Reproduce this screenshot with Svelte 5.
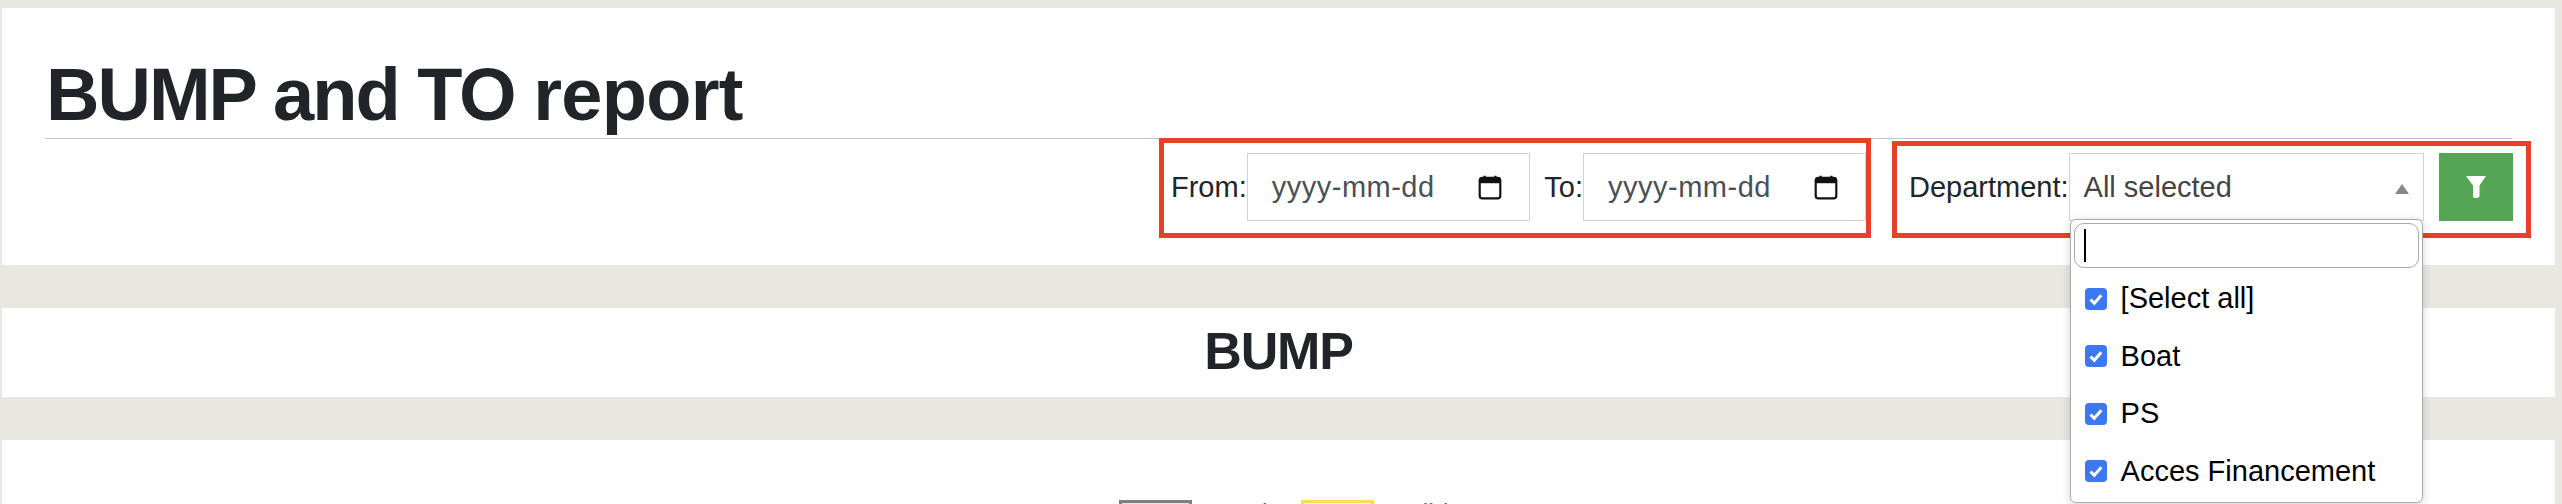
<script>
  const departments = ['[Select all]', 'Boat', 'PS', 'Acces Financement']
</script>

{#snippet dateField(label)}
  <span class="lbl">{label}</span>
  <div class="date">
    <span class="ph">yyyy-mm-dd</span>
    <svg class="cal" viewBox="0 0 24 24" width="26" height="26">
      <path d="M7 1.5v3M17 1.5v3" stroke="#111" stroke-width="2" />
      <rect x="2.5" y="3.5" width="19" height="19" rx="2.5" fill="none" stroke="#111" stroke-width="2" />
      <rect x="2.5" y="3.5" width="19" height="5" fill="#111" />
    </svg>
  </div>
{/snippet}

<div class="page">
  <section class="head">
    <h1>BUMP and TO <span class="tail">report</span></h1>
    <div class="filters">
      <div class="group dates">
        {@render dateField('From:')}
        <span class="gap"></span>
        {@render dateField('To:')}
      </div>
      <div class="group depts">
        <span class="lbl">Department:</span>
        <div class="select">
          <span>All selected</span>
          <i class="arrow"></i>
          <div class="menu">
            <div class="search"><i class="caret"></i></div>
            <ul>
              {#each departments as d}
                <li>
                  <svg viewBox="0 0 22 22" width="22" height="22">
                    <rect width="22" height="22" rx="4" fill="#3b78f2" />
                    <path d="M5.5 11.5l3.8 3.8 7-8" fill="none" stroke="#fff" stroke-width="3" />
                  </svg>
                  {d}
                </li>
              {/each}
            </ul>
          </div>
        </div>
        <button class="go" aria-label="Filter">
          <svg viewBox="0 0 20 22" width="20" height="22">
            <path d="M0 0h20L13.5 9.500V20.500L11 22H8.500q-1.500 0-1.500-2V9.500z" fill="#fff" />
          </svg>
        </button>
      </div>
    </div>
  </section>

  <section class="title">
    <h2>BUMP</h2>
  </section>

  <section class="chart">
    <div class="legend">
      <i class="swatch grey"></i><span>Sunday</span>
      <i class="swatch yellow"></i><span>Holiday</span>
    </div>
  </section>
</div>

<style>
  :global(body) {
    margin: 0;
    background: #e8e7e2;
    font-family: 'Liberation Sans', Arial, sans-serif;
    color: #212529;
  }
  .page {
    height: 504px;
    overflow: hidden;
    padding: 8px 7px 0 2px;
    box-sizing: border-box;
  }
  section {
    background: #fff;
  }
  .head {
    height: 257px;
    padding: 0 43px;
    box-sizing: border-box;
  }
  h1 {
    margin: 0;
    height: 131px;
    box-sizing: border-box;
    padding-top: 45px;
    padding-left: 1px;
    font-size: 74px;
    line-height: 84px;
    font-weight: 700;
    letter-spacing: -2px;
    white-space: nowrap;
    border-bottom: 1px solid #c4c4c4;
  }
  .tail {
    letter-spacing: -0.7px;
  }
  .filters {
    display: flex;
    justify-content: flex-end;
    align-items: flex-start;
    margin-top: -1px;
  }
  .group {
    display: flex;
    align-items: center;
    box-sizing: border-box;
    border: 5px solid #e8412a;
    height: 100px;
    font-size: 29px;
  }
  .dates {
    width: 712px;
    margin-right: 21px;
    padding-left: 7px;
    padding-bottom: 2px;
  }
  .depts {
    width: 639px;
    margin-top: 3px;
    height: 97px;
    margin-right: -19px;
    padding-left: 12px;
    padding-bottom: 5px;
  }
  .lbl {
    white-space: nowrap;
  }
  .gap {
    flex: 1;
  }
  .date {
    width: 283px;
    height: 68px;
    flex: none;
    box-sizing: border-box;
    border: 1px solid #ced4da;
    display: flex;
    align-items: center;
    justify-content: space-between;
    padding: 0 26px 0 24px;
    color: #495057;
    letter-spacing: 0.5px;
  }
  .select {
    position: relative;
    width: 355px;
    height: 68px;
    flex: none;
    box-sizing: border-box;
    border: 1px solid #ced4da;
    display: flex;
    align-items: center;
    justify-content: space-between;
    padding: 0 14px 0 14px;
    color: #444;
  }
  .arrow {
    width: 0;
    height: 0;
    border: 7px solid transparent;
    border-top: 0;
    border-bottom: 10px solid #888;
    margin-top: 4px;
  }
  .menu {
    position: absolute;
    left: 0;
    top: 65px;
    width: 353px;
    height: 284px;
    box-sizing: border-box;
    background: #fff;
    border: 1px solid #aaa;
    border-radius: 6px;
    box-shadow: 0 2px 10px rgba(0, 0, 0, 0.18);
    padding: 3px;
    color: #000;
    font-size: 29px;
  }
  .search {
    height: 45px;
    box-sizing: border-box;
    border: 1px solid #aaa;
    border-radius: 10px;
    position: relative;
  }
  .caret {
    position: absolute;
    left: 9px;
    top: 5px;
    width: 2px;
    height: 33px;
    background: #000;
  }
  ul {
    list-style: none;
    margin: 0;
    padding: 0 0 0 11px;
  }
  li {
    display: flex;
    align-items: center;
    gap: 14px;
    height: 57.5px;
    white-space: nowrap;
  }
  li:first-child {
    margin-top: 2px;
  }
  .go {
    width: 74px;
    height: 68px;
    flex: none;
    margin-left: 15px;
    padding: 0;
    border: 0;
    background: #55a654;
    display: flex;
    align-items: center;
    justify-content: center;
  }
  .title {
    margin-top: 43px;
    height: 89px;
    text-align: center;
  }
  h2 {
    margin: 0;
    font-size: 52px;
    line-height: 87px;
    font-weight: 700;
    letter-spacing: -1.2px;
  }
  .chart {
    margin-top: 43px;
    height: 64px;
    padding: 60px 0 0 1117px;
    box-sizing: border-box;
  }
  .legend {
    display: flex;
    align-items: flex-start;
    font-size: 26px;
    line-height: 26px;
    color: #666;
  }
  .swatch {
    width: 73px;
    height: 30px;
    box-sizing: border-box;
    border: 3px solid;
    margin-right: 15px;
    flex: none;
  }
  .legend span {
    margin-right: 6px;
  }
  .grey {
    border-color: #808080;
    background: #e4e4e4;
  }
  .yellow {
    border-color: #ffdc4f;
    background: #fff6c8;
  }
</style>
